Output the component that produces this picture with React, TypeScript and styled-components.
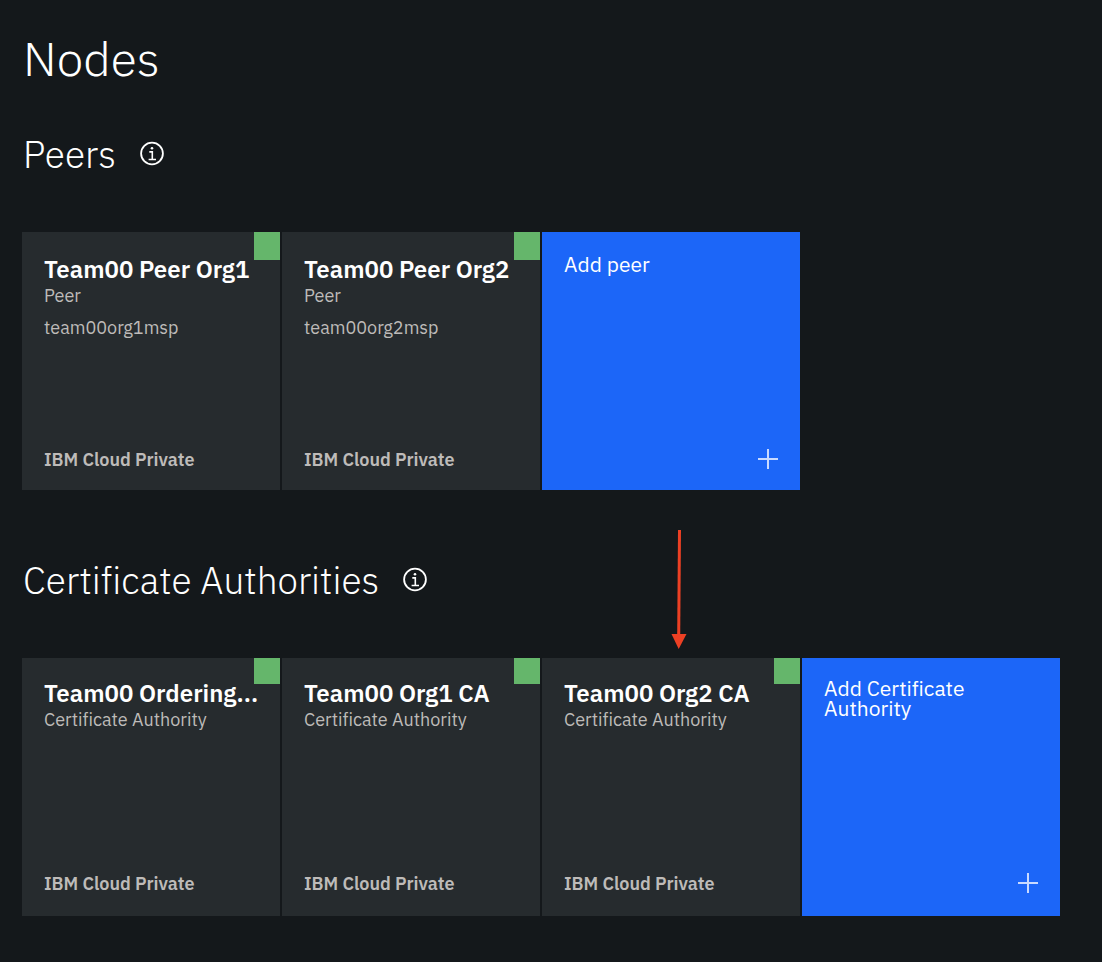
import React from 'react';
import styled, { createGlobalStyle } from 'styled-components';

const GlobalStyle = createGlobalStyle`
  * { box-sizing: border-box; }
  html { background: #14181b; }
  body {
    margin: 0;
    background: #14181b;
    color: #fff;
    font-family: 'IBM Plex Sans', 'Roboto', sans-serif;
    font-variant-ligatures: no-common-ligatures;
  }
`;

const Page = styled.main`
  position: relative;
  padding: 26px 22px 46px;
`;

const PageTitle = styled.h1`
  margin: 0 0 40px 1px;
  font-size: 48px;
  line-height: 64px;
  font-weight: 300;
`;

const Section = styled.section`
  & + & { margin-top: 66px; }
`;

const SectionHeader = styled.header`
  display: flex;
  align-items: center;
  gap: 24px;
  margin: 0 0 54px 1px;
`;

const SectionTitle = styled.h2`
  margin: 0;
  font-size: 37px;
  line-height: 48px;
  font-weight: 300;
`;

const InfoButton = styled.button`
  display: flex;
  padding: 0;
  border: 0;
  background: none;
  color: inherit;
`;

const TileGrid = styled.ul`
  display: flex;
  flex-wrap: wrap;
  gap: 2px;
  margin: 0;
  padding: 0;
  list-style: none;
`;

const TileItem = styled.li`
  display: flex;
`;

const Tile = styled.button<{ $variant: 'node' | 'add'; $inset: number }>`
  position: relative;
  display: flex;
  flex-direction: column;
  width: 258px;
  min-height: 258px;
  padding: ${({ $inset }) => `${20 + $inset}px 21px ${22 - $inset}px 22px`};
  border: 0;
  background: ${({ $variant }) => ($variant === 'add' ? '#1c66f8' : '#262b2e')};
  color: #fff;
  font-family: inherit;
  font-variant-ligatures: inherit;
  text-align: left;
`;

const Status = styled.span<{ $inset: number }>`
  position: absolute;
  top: 0;
  right: 0;
  width: 26px;
  height: ${({ $inset }) => 26 + $inset}px;
  background: #65b66b;
`;

const NodeName = styled.strong`
  margin-bottom: 2px;
  font-size: 24px;
  line-height: 30px;
  font-weight: 600;
  white-space: nowrap;
`;

const Detail = styled.span`
  margin-bottom: 12px;
  color: #bebbb9;
  font-size: 18px;
  line-height: 20px;
`;

const Location = styled.span`
  margin-top: auto;
  color: #bebbb9;
  font-size: 18px;
  line-height: 20px;
  font-weight: 600;
`;

const AddLabel = styled.span`
  max-width: 160px;
  font-size: 21px;
  line-height: 20px;
`;

const PlusIcon = styled.svg`
  margin-top: auto;
  align-self: flex-end;
`;

const Pointer = styled.svg`
  position: absolute;
  top: 528px;
  left: 670px;
`;

interface NodeInfo {
  name: string;
  kind: string;
  msp?: string;
}

interface NodeSectionProps {
  title: string;
  nodes: NodeInfo[];
  addLabel: string;
  inset?: number;
}

function InfoIcon() {
  return (
    <svg width="24" height="26" viewBox="0 0 24 26" fill="none" stroke="currentColor" strokeWidth="1.8" aria-hidden="true">
      <circle cx="12" cy="12.5" r="10.9" />
      <path d="M9.3 10.9H12.3V18.2M8.6 18.5H16" strokeWidth="1.6" />
      <circle cx="12" cy="7.2" r="1.3" fill="currentColor" stroke="none" />
    </svg>
  );
}

function NodeSection({ title, nodes, addLabel, inset = 0 }: NodeSectionProps) {
  return (
    <Section>
      <SectionHeader>
        <SectionTitle>{title}</SectionTitle>
        <InfoButton type="button" aria-label={`About ${title}`}>
          <InfoIcon />
        </InfoButton>
      </SectionHeader>
      <TileGrid>
        {nodes.map((node) => (
          <TileItem key={node.name}>
            <Tile type="button" $variant="node" $inset={inset}>
              <Status $inset={inset} />
              <NodeName>{node.name}</NodeName>
              <Detail>{node.kind}</Detail>
              {node.msp && <Detail>{node.msp}</Detail>}
              <Location>IBM Cloud Private</Location>
            </Tile>
          </TileItem>
        ))}
        <TileItem>
          <Tile type="button" $variant="add" $inset={inset}>
            <AddLabel>{addLabel}</AddLabel>
            <PlusIcon width="22" height="22" viewBox="0 0 22 22" fill="none" stroke="#c9daff" strokeWidth="2" aria-hidden="true">
              <path d="M11 1V21M1 11H21" />
            </PlusIcon>
          </Tile>
        </TileItem>
      </TileGrid>
    </Section>
  );
}

const peers: NodeInfo[] = [
  { name: 'Team00 Peer Org1', kind: 'Peer', msp: 'team00org1msp' },
  { name: 'Team00 Peer Org2', kind: 'Peer', msp: 'team00org2msp' },
];

const authorities: NodeInfo[] = [
  { name: 'Team00 Ordering...', kind: 'Certificate Authority' },
  { name: 'Team00 Org1 CA', kind: 'Certificate Authority' },
  { name: 'Team00 Org2 CA', kind: 'Certificate Authority' },
];

export default function App() {
  return (
    <>
      <GlobalStyle />
      <Page>
        <PageTitle>Nodes</PageTitle>
        <NodeSection title="Peers" nodes={peers} addLabel="Add peer" inset={2} />
        <NodeSection title="Certificate Authorities" nodes={authorities} addLabel="Add Certificate Authority" />
        <Pointer width="18" height="122" viewBox="0 0 18 122" aria-hidden="true">
          <path d="M9.5 2L8.7 108" stroke="#ed4024" strokeWidth="3" />
          <path d="M1.5 106H16.5L8.7 121Z" fill="#ed4024" />
        </Pointer>
      </Page>
    </>
  );
}
